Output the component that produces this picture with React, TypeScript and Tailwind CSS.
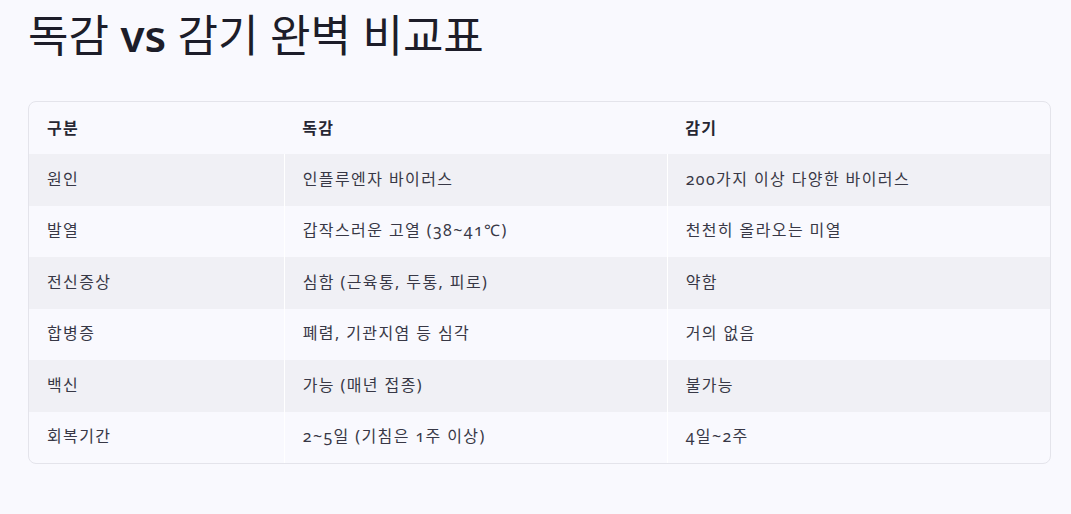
const rows: [string, string, string][] = [
  ["원인", "인플루엔자 바이러스", "200가지 이상 다양한 바이러스"],
  ["발열", "갑작스러운 고열 (38~41℃)", "천천히 올라오는 미열"],
  ["전신증상", "심함 (근육통, 두통, 피로)", "약함"],
  ["합병증", "폐렴, 기관지염 등 심각", "거의 없음"],
  ["백신", "가능 (매년 접종)", "불가능"],
  ["회복기간", "2~5일 (기침은 1주 이상)", "4일~2주"],
];

export default function App() {
  return (
    <div
      className="min-h-[514px] bg-[#f9f9fe] pt-[5px] pr-5 pl-7 text-[#383846] oldstyle-nums"
      style={{ fontFamily: '"Noto Sans", "Noto Sans CJK KR", sans-serif' }}
    >
      <h1 className="text-[44px] leading-[60px] font-normal text-[#1d1d29]">
        독감 <span className="font-semibold">vs</span> 감기 완벽 비교표
      </h1>

      <div className="mt-[36px] overflow-hidden rounded-lg border border-[#e4e4eb]">
        <table className="w-full table-fixed border-collapse text-[16px] tracking-[1.4px]">
          <colgroup>
            <col className="w-[25%]" />
            <col className="w-[37.5%]" />
            <col className="w-[37.5%]" />
          </colgroup>
          <thead>
            <tr className="h-[52px] text-left">
              <th className="px-[18px] font-bold text-[#272733]">구분</th>
              <th className="px-[18px] font-bold text-[#272733]">독감</th>
              <th className="px-[18px] font-bold text-[#272733]">감기</th>
            </tr>
          </thead>
          <tbody>
            {rows.map((r, i) => (
              <tr key={r[0]} className={i % 2 === 0 ? "h-[51.5px] bg-[#f0f0f5]" : "h-[51.5px]"}>
                <td className="border-r border-white px-[18px] pb-[2px]">{r[0]}</td>
                <td className="border-r border-white px-[18px] pb-[2px]">{r[1]}</td>
                <td className="px-[18px] pb-[2px]">{r[2]}</td>
              </tr>
            ))}
          </tbody>
        </table>
      </div>
    </div>
  );
}
